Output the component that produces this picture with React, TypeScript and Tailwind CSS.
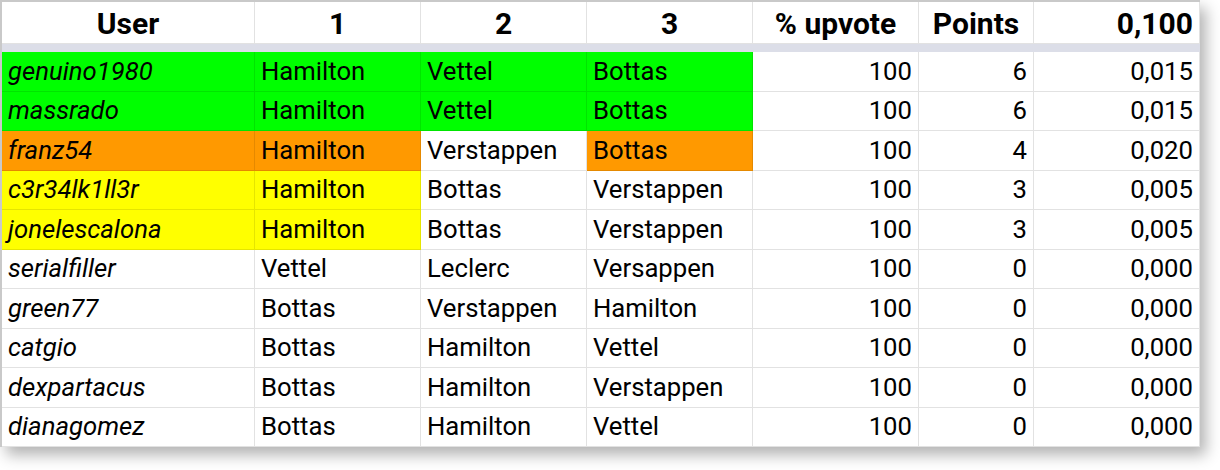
import React from 'react';

type Row = {
  user: string;
  p1: string;
  p2: string;
  p3: string;
  upvote: number;
  points: number;
  score: string;
  // fill colour per cell for user, p1, p2, p3
  fills: (string | null)[];
};

const G = 'bg-[#00ff00]';
const O = 'bg-[#ff9900]';
const Y = 'bg-[#ffff00]';

const rows: Row[] = [
  { user: 'genuino1980', p1: 'Hamilton', p2: 'Vettel', p3: 'Bottas', upvote: 100, points: 6, score: '0,015', fills: [G, G, G, G] },
  { user: 'massrado', p1: 'Hamilton', p2: 'Vettel', p3: 'Bottas', upvote: 100, points: 6, score: '0,015', fills: [G, G, G, G] },
  { user: 'franz54', p1: 'Hamilton', p2: 'Verstappen', p3: 'Bottas', upvote: 100, points: 4, score: '0,020', fills: [O, O, null, O] },
  { user: 'c3r34lk1ll3r', p1: 'Hamilton', p2: 'Bottas', p3: 'Verstappen', upvote: 100, points: 3, score: '0,005', fills: [Y, Y, null, null] },
  { user: 'jonelescalona', p1: 'Hamilton', p2: 'Bottas', p3: 'Verstappen', upvote: 100, points: 3, score: '0,005', fills: [Y, Y, null, null] },
  { user: 'serialfiller', p1: 'Vettel', p2: 'Leclerc', p3: 'Versappen', upvote: 100, points: 0, score: '0,000', fills: [null, null, null, null] },
  { user: 'green77', p1: 'Bottas', p2: 'Verstappen', p3: 'Hamilton', upvote: 100, points: 0, score: '0,000', fills: [null, null, null, null] },
  { user: 'catgio', p1: 'Bottas', p2: 'Hamilton', p3: 'Vettel', upvote: 100, points: 0, score: '0,000', fills: [null, null, null, null] },
  { user: 'dexpartacus', p1: 'Bottas', p2: 'Hamilton', p3: 'Verstappen', upvote: 100, points: 0, score: '0,000', fills: [null, null, null, null] },
  { user: 'dianagomez', p1: 'Bottas', p2: 'Hamilton', p3: 'Vettel', upvote: 100, points: 0, score: '0,000', fills: [null, null, null, null] },
];

const cols = 'grid grid-cols-[253px_166px_166px_166px_166px_115px_166px]';

function Cell({ fill, className = '', children }: { fill?: string | null; className?: string; children: React.ReactNode }) {
  return (
    <div
      className={`flex items-center px-[6px] border-r border-b whitespace-nowrap overflow-hidden ${
        fill ? `${fill} border-black/10` : 'bg-white border-[#e2e2e2]'
      } ${className}`}
    >
      {children}
    </div>
  );
}

function App() {
  return (
    <div className="w-[1220px] h-[470px] bg-white font-['Roboto',sans-serif] text-black">
      <div className="w-[1200px] border-t-2 border-l-2 border-[#c9c9c9] bg-white shadow-[6px_8px_14px_rgba(0,0,0,0.3)]">
        {/* Header */}
        <div className={`${cols} h-[42px] text-[30px] font-bold leading-none`}>
          <Cell className="justify-center pt-[3px]">User</Cell>
          <Cell className="justify-center pt-[3px]">1</Cell>
          <Cell className="justify-center pt-[3px]">2</Cell>
          <Cell className="justify-center pt-[3px]">3</Cell>
          <Cell className="justify-center pt-[3px]">% upvote</Cell>
          <Cell className="justify-center pt-[3px]">Points</Cell>
          <Cell className="justify-end pt-[3px]">0,100</Cell>
        </div>
        {/* Frozen row divider */}
        <div className="h-[8px] bg-[#dcdee8]" />
        {rows.map((r) => (
          <div key={r.user} className={`${cols} h-[39.5px] text-[25.7px]`}>
            <Cell fill={r.fills[0]} className="italic">{r.user}</Cell>
            <Cell fill={r.fills[1]}>{r.p1}</Cell>
            <Cell fill={r.fills[2]}>{r.p2}</Cell>
            <Cell fill={r.fills[3]}>{r.p3}</Cell>
            <Cell className="justify-end">{r.upvote}</Cell>
            <Cell className="justify-end">{r.points}</Cell>
            <Cell className="justify-end">{r.score}</Cell>
          </div>
        ))}
      </div>
    </div>
  );
}

export default App;
